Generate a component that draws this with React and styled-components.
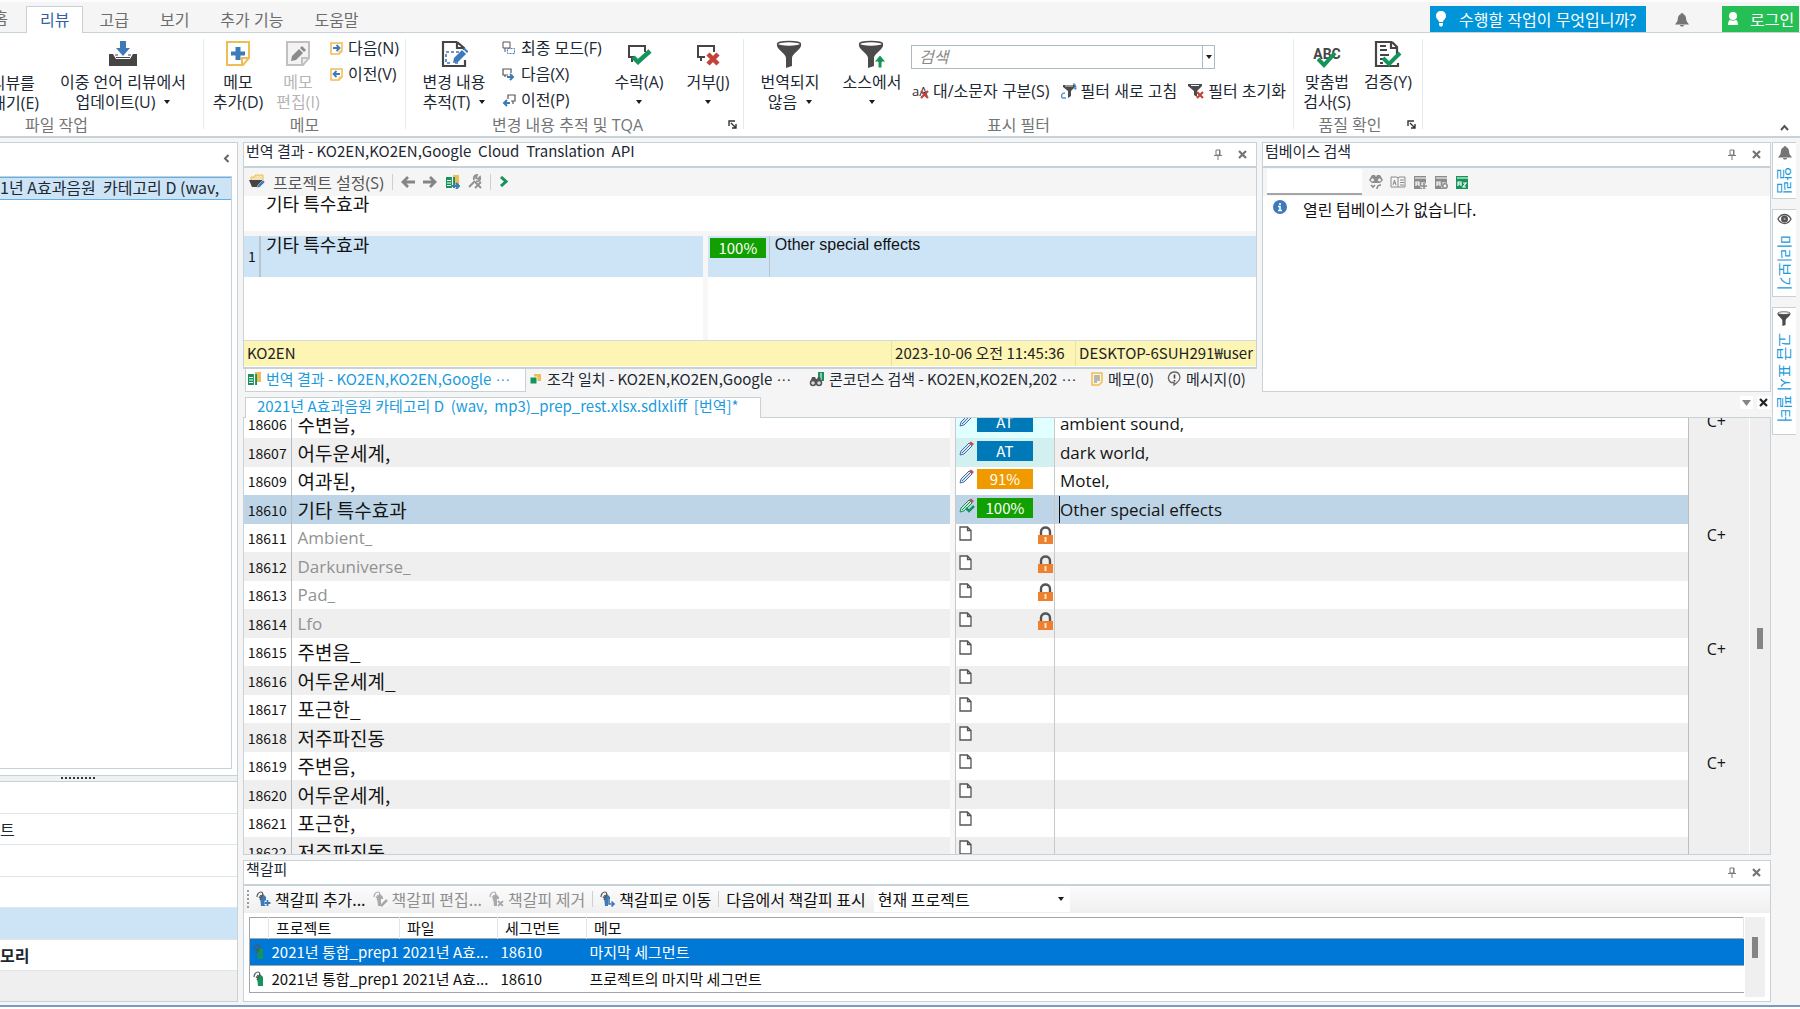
import React from 'react';
import styled, { createGlobalStyle, css } from 'styled-components';

const line = '#c6d2d8';
const ui = '"Open Sans", "Noto Sans CJK KR", sans-serif';
const thin = '"Noto Sans CJK KR", "Liberation Sans", sans-serif';

const GlobalStyle = createGlobalStyle`
  * { box-sizing: border-box; }
  html, body { margin: 0; }
  body {
    background: #f5f5f5;
    color: #1c2833;
    font-family: ${ui};
    font-size: 16px;
    overflow: hidden;
  }
  button, input, select {
    font: inherit;
    color: inherit;
    border: 0;
    padding: 0;
    margin: 0;
    background: none;
    border-radius: 0;
    outline: 0;
  }
  button { white-space: pre; }
  svg { display: block; flex: none; }
  table { border-collapse: collapse; border-spacing: 0; }
`;

/* ---------- icons ---------- */

const Svg = ({ w = 16, h = w, box, children }) => (
  <svg width={w} height={h} viewBox={box || `0 0 ${w} ${h}`} fill="none" aria-hidden="true">
    {children}
  </svg>
);

const Caret = () => <Svg w={6} h={4}><path d="M0 0h6L3 4z" fill="#1b1b1b" /></Svg>;

const UpdateIcon = () => (
  <Svg w={28}>
    <path d="M11 1h6v7h4l-7 8-7-8h4z" fill="#3f7ab8" />
    <path d="M0 14h4l3 5h14l3-5h4v12H0z" fill="#454545" />
    <path d="M6 15h3M19 15h3M7 17.500h14" stroke="#454545" strokeWidth="1.200" />
  </Svg>
);

const NoteAddIcon = () => (
  <Svg w={28}>
    <path d="M3 2h22v16l-6 7H3z" stroke="#eebd55" strokeWidth="2" fill="#fff" />
    <path d="M24 18h-6v7" stroke="#eebd55" strokeWidth="2" />
    <path d="M11.500 7h5v4.500H21v4h-4.500V20h-5v-4.500H7v-4h4.500z" fill="#3f7ab8" />
  </Svg>
);

const NoteEditIcon = () => (
  <Svg w={28}>
    <path d="M3 2h22v16l-6 7H3z" stroke="#c0c0c0" strokeWidth="2" fill="#f3f3f3" />
    <path d="M24 18h-6v7" stroke="#c0c0c0" strokeWidth="2" />
    <path d="M7 21l1-5 7-7 4 4-7 7zM16 8l2-2 4 4-2 2z" fill="#8b8b8b" />
  </Svg>
);

const NoteArrow = ({ back }) => (
  <Svg w={13}>
    <path d="M1 1h11v8l-3 3H1z" stroke="#eebd55" strokeWidth="1.500" fill="#fff" />
    <path d="M12 9H9v3" stroke="#eebd55" />
    <path
      d={back ? 'M10 6H4M6.500 3L3.500 6l3 3' : 'M3 6h6M6.500 3l3 3-3 3'}
      stroke="#3f7ab8"
      strokeWidth="1.800"
    />
  </Svg>
);

const TrackIcon = () => (
  <Svg w={28}>
    <path d="M17 2H3v24h22v-6M17 2l7 6v2M17 2v6h7" stroke="#454545" strokeWidth="2.200" />
    <path d="M19 12H6v11h6M18 23h-4" stroke="#3f7ab8" strokeWidth="1.600" strokeDasharray="3 2" />
    <path d="M13 23l1-5 8-8 4 4-8 8zM23 9l1.500-1.500 4 4L27 13z" fill="#3f7ab8" />
  </Svg>
);

const FinalModeIcon = () => (
  <Svg w={14}>
    <path d="M1 1h7v6H1zM3 7v4" stroke="#555" />
    <path d="M5.500 7.500h7v5h-7z" stroke="#3f7ab8" strokeDasharray="2 1" />
  </Svg>
);

const ChangeArrow = ({ back }) => (
  <Svg w={14}>
    <path
      d={back ? 'M6 6V2h7v6H9M11 8v3' : 'M6 8H1V2h8v4M3 8v2'}
      stroke="#555"
      strokeWidth="1.200"
    />
    <path
      d={back ? 'M8 10H2M5 7l-3 3 3 3' : 'M5 10h6M8 7l3 3-3 3'}
      stroke="#3f7ab8"
      strokeWidth="2"
    />
  </Svg>
);

const AcceptIcon = () => (
  <Svg w={26}>
    <path d="M8 16H3V5h16v6M6 16v5" stroke="#454545" strokeWidth="2" />
    <path d="M7 16l5 5L24 10" stroke="#14935a" strokeWidth="4.500" />
  </Svg>
);

const RejectIcon = () => (
  <Svg w={26}>
    <path d="M10 16H3V5h16v6M6 16v4" stroke="#454545" strokeWidth="2" />
    <path d="M13 13l10 10M23 13L13 23" stroke="#c24438" strokeWidth="4.500" />
  </Svg>
);

const Funnel = ({ w = 28, arrow }) => (
  <Svg w={w} box="0 0 28 28">
    <path d="M1 4v2c1 4 9 8 9 12v10l6-2v-8c0-4 8-8 9-12V4z" fill="#4b4b4b" />
    <ellipse cx="13" cy="4" rx="11.500" ry="2.500" fill="#fff" stroke="#4b4b4b" strokeWidth="1.500" />
    {arrow && <path d="M20 28v-6h-4l6-7 6 7h-4v6z" fill="#14935a" stroke="#fff" />}
  </Svg>
);

const FunnelRefresh = () => (
  <Svg w={16}>
    <path d="M2 2h12v2l-4 4v5l-3 2V8L2 4z" fill="#4b4b4b" />
    <path d="M4 3h8" stroke="#ddd" />
    <path d="M12 1c2 0 3 2 3 5M13 5l2 1.500M4 10c-3 0-4 2-3 5M1 15h4" stroke="#5b95d1" strokeWidth="1.400" />
  </Svg>
);

const FunnelClear = () => (
  <Svg w={16}>
    <path d="M0 1h14v2L9 8v6l-3-2V8L0 3z" fill="#4b4b4b" />
    <path d="M3 2.500h8" stroke="#fff" />
    <path d="M9 9l6 6M15 9l-6 6" stroke="#c24438" strokeWidth="2.200" />
  </Svg>
);

const CaseIcon = () => (
  <CaseGlyph>
    aA
    <Svg w={9}><path d="M1 1l7 7M8 1L1 8" stroke="#c24438" strokeWidth="2.200" /></Svg>
  </CaseGlyph>
);

const SpellIcon = () => (
  <AbcGlyph>
    ABC
    <Svg w={20} h={16}><path d="M1 7l6 6L18 1" stroke="#14935a" strokeWidth="4" /></Svg>
  </AbcGlyph>
);

const VerifyIcon = () => (
  <Svg w={28}>
    <path d="M18 2H2v24h22v-3M18 2l5 5v7M17 2v6h6" stroke="#454545" strokeWidth="2.200" />
    <path d="M6 6h6M6 10h7M6 15h9M6 19h3M6 23h3" stroke="#454545" strokeWidth="2" />
    <path d="M9 18l6 6L26 13" stroke="#14935a" strokeWidth="4" />
  </Svg>
);

const Launcher = () => (
  <Svg w={9}><path d="M1 6V1h6M3 3l5 5M8 4v4H4" stroke="#333" strokeWidth="1.400" /></Svg>
);

const Bell = ({ w = 14 }) => (
  <Svg w={w} h={w} box="0 0 14 14">
    <path d="M7 0c1 0 1.500 1 1.500 1.500C11 2 11 5 11.500 8L14 11.500H0L2.500 8C3 5 3 2 5.500 1.500 5.500 1 6 0 7 0zM5 12h4c0 2-4 2-4 0z" fill="#757575" />
  </Svg>
);

const Bulb = () => (
  <Svg w={12} h={16}>
    <path d="M6 0c3 0 5 2 5 5s-3 4-3 6H4C4 9 1 8 1 5s2-5 5-5zM4 12h4v2l-1 1.500H5L4 14z" fill="#fff" />
  </Svg>
);

const Person = () => (
  <Svg w={12} h={14}>
    <circle cx="6" cy="4" r="4" fill="#fff" />
    <path d="M1 13c0-3 1-5 2-5 2 1 4 1 6 0 1 0 2 2 2 5z" fill="#fff" />
  </Svg>
);

const Pin = () => (
  <Svg w={8} h={11}><path d="M2 1h4v5H2zM0 6.500h8M4 7v4M5.500 1v5" stroke="#7b7b7b" /></Svg>
);

const Cross = ({ color = '#747474' }) => (
  <Svg w={9}><path d="M1 1l7 7M8 1L1 8" stroke={color} strokeWidth="2.200" /></Svg>
);

const ProjectIcon = () => (
  <Svg w={16}>
    <path d="M2 6V3h4V1h8v5" fill="#f7e2ae" stroke="#eebd55" />
    <path d="M0 6h13v2l-3 5H3z" fill="#454545" />
    <path d="M8 14l1-3 5-5 2 2-5 5z" fill="#3f7ab8" stroke="#f5f5f5" strokeWidth="0.500" />
  </Svg>
);

const Arrow = ({ back }) => (
  <Svg w={14} h={12}>
    <path d={back ? 'M14 6H2M7 1L2 6l5 5' : 'M0 6h12M7 1l5 5-5 5'} stroke="#858585" strokeWidth="2.800" />
  </Svg>
);

const MemoryIcon = ({ arrow }) => (
  <Svg w={15}>
    <path d="M8 1h6v10H8z" fill="#eebd55" />
    <path d="M1 3h9v11H1z" fill="#14935a" />
    <path d="M2 6.500h4M2 9h4M2 11.500h4M7.500 3v11" stroke="#fff" strokeWidth="1.200" />
    {arrow && <path d="M7 12h7M11 9l3 3-3 3" stroke="#3f7ab8" strokeWidth="2" />}
  </Svg>
);

const ToolsIcon = () => (
  <Svg w={14} h={15}>
    <path d="M1 13l6-6M6 6c-1-3 1-5 3-5l-1 3 2 1 2-2c1 3-1 5-4 4" stroke="#909090" strokeWidth="1.800" />
    <path d="M7 8l6 6M13 8l-6 6" stroke="#909090" strokeWidth="1.800" />
  </Svg>
);

const ChevronGo = () => (
  <Svg w={9} h={11}><path d="M2 1l5 4.500L2 10" stroke="#14935a" strokeWidth="3" /></Svg>
);

const FragmentIcon = () => (
  <Svg w={14}><path d="M5 2h7v7H5z" fill="#eebd55" /><path d="M1 5h7v7H1z" fill="#14935a" stroke="#f5f5f5" /></Svg>
);

const ConcordanceIcon = () => (
  <Svg w={16}>
    <path d="M9 1h6v9H9z" fill="#14935a" />
    <path d="M12 2v7" stroke="#fff" strokeWidth="1" />
    <path d="M3 6h3l1 2h1l1-2h2l2 6H1z" fill="#555" />
    <circle cx="4" cy="12" r="2.500" fill="#ddd" stroke="#555" strokeWidth="1.500" />
    <circle cx="10" cy="12" r="2.500" fill="#ddd" stroke="#555" strokeWidth="1.500" />
  </Svg>
);

const MemoIcon = () => (
  <Svg w={13} h={14}>
    <path d="M1 1h10v9l-3 3H1z" fill="#fdf6e3" stroke="#eebd55" strokeWidth="1.500" />
    <path d="M3 4h6M3 6h6M3 8h6M3 10h3" stroke="#777" />
  </Svg>
);

const MessageIcon = () => (
  <Svg w={15}>
    <path d="M4 11.500C-1 8 2 1 7.500 1S15 8 10 11.500L7 14v-2.500z" stroke="#666" strokeWidth="1.300" />
    <path d="M7.500 3.500v4M7.500 9v1.500" stroke="#444" strokeWidth="1.600" />
  </Svg>
);

const BinocularIcon = () => (
  <Svg w={14} h={16}>
    <path d="M3 1h3l1 2 1-2h3l3 5-3 3H3L0 6z" fill="#8b8b8b" />
    <circle cx="3.500" cy="6" r="2" fill="#f5f5f5" stroke="#8b8b8b" />
    <circle cx="10.500" cy="6" r="2" fill="#f5f5f5" stroke="#8b8b8b" />
    <path d="M2 11l2 2 2-2M8 15c0-3 1-4 4-4" stroke="#8b8b8b" strokeWidth="1.600" />
  </Svg>
);

const BookOpenIcon = () => (
  <Svg w={16} h={14}>
    <path d="M1 2h6l1 1 1-1h6v10H1zM8 3v9M10 5h4M10 7.500h4M10 10h4M3 10l1.500-5L6 10M3.500 8h2" stroke="#8b8b8b" />
  </Svg>
);

const TermIcon = ({ color = '#8b8b8b', mark }) => (
  <Svg w={14} h={15}>
    <path d="M1 1h12v13H1z" fill={color} />
    <path d="M2 3h11" stroke="#fff" />
    <path d="M3 11V7h3v4M3 9h3M8 8h3l-3 4h3" stroke="#fff" strokeWidth="1.200" />
    {mark && <circle cx="11" cy="11" r="3" fill="#f5f5f5" />}
    {mark === 'plus' && <path d="M11 8v6M8 11h6" stroke={color} strokeWidth="1.600" />}
    {mark === 'gear' && <circle cx="11" cy="11" r="2.200" stroke={color} strokeWidth="1.500" />}
  </Svg>
);

const InfoIcon = () => (
  <Svg w={14}>
    <circle cx="7" cy="7" r="7" fill="#3f7ab8" />
    <path d="M7 3v2M5 6.500h2v4M5 10.500h4" stroke="#fff" strokeWidth="1.600" />
  </Svg>
);

const EyeIcon = () => (
  <Svg w={15} h={12}>
    <path d="M1 6c3-6 10-6 13 0-3 6-10 6-13 0z" stroke="#555" strokeWidth="1.300" />
    <circle cx="7.500" cy="6" r="3.500" fill="#555" />
    <circle cx="7.500" cy="6" r="1" fill="#aaa" />
  </Svg>
);

const DraftIcon = ({ done }) => (
  <Svg w={16}>
    <path d="M1 14l1-4 8-8 3 3-8 8z" fill={done ? '#c9e6d8' : '#dbe7f5'} stroke={done ? '#14935a' : '#3f6fae'} />
    <path d="M3 12l8-8" stroke={done ? '#14935a' : '#3f6fae'} />
    <path d="M10 2l2-1.500 3 2.500-2 2z" fill="#c9504a" />
    {done && <path d="M7 10l3 3 5-5" stroke="#14935a" strokeWidth="2.500" />}
  </Svg>
);

const PageIcon = () => (
  <Svg w={13} h={15}>
    <path d="M1 1h7.500L12 4.500V14H1zM8.500 1v3.500H12" fill="#fff" stroke="#555" strokeWidth="1.300" />
  </Svg>
);

const LockIcon = () => (
  <Svg w={15} h={18}>
    <path d="M3 9V6c0-6 9-6 9 0v3" stroke="#555" strokeWidth="2.400" />
    <path d="M0 9h15v9H0z" fill="#ee8130" />
    <path d="M7.500 11v5" stroke="#ffe2c8" strokeWidth="2" />
  </Svg>
);

/* a tag on a clip; "kind" adds the action mark */
const MarkIcon = ({ kind, off }) => {
  const tone = off ? '#a9a9a9' : '#3f7ab8';
  return (
    <Svg w={15} h={16}>
      <path d="M4 6l3-3 3 3v9H5z" fill={kind ? tone : '#14935a'} />
      <path d="M1 6c0-3 2-5 4-5s2 2 1 4L4 9M3 7l2-3" stroke={off ? '#a9a9a9' : '#555'} strokeWidth="1.200" />
      {kind && kind !== 'add' && <path d="M8 8h7v8H8z" fill="#f8f8f8" />}
      {kind === 'add' && <path d="M11.500 9v6M8.500 12h6" stroke="#f8f8f8" strokeWidth="4" />}
      {kind === 'add' && <path d="M11.500 9v6M8.500 12h6" stroke={tone} strokeWidth="1.800" />}
      {kind === 'edit' && <path d="M8 15l6-6" stroke={tone} strokeWidth="2.600" />}
      {kind === 'remove' && <path d="M9 10l5 5M14 10l-5 5" stroke={tone} strokeWidth="1.800" />}
      {kind === 'go' && <path d="M9 8v5h5M11.500 10.500l2.500 2.500-2.500 2.500" stroke={tone} strokeWidth="1.600" />}
    </Svg>
  );
};

/* ---------- top bar and ribbon ---------- */

const tabs = [
  { id: 1, label: '리뷰', active: true },
  { id: 2, label: '고급' },
  { id: 3, label: '보기' },
  { id: 4, label: '추가 기능' },
  { id: 5, label: '도움말' },
];

const TopBar = () => (
  <Top>
    <CutTab><span>홈</span></CutTab>
    {tabs.map((tab) => (
      <MenuTab key={tab.id} $active={tab.active}>{tab.label}</MenuTab>
    ))}
    <Spacer />
    <TellMe><Bulb />수행할 작업이 무엇입니까?</TellMe>
    <BellButton aria-label="알림"><Bell w={14} /></BellButton>
    <Login><Person />로그인</Login>
  </Top>
);

const BigItem = ({ icon, lines, caret, width, off }) => (
  <Big $width={width} $off={off}>
    <BigIcon>{icon}</BigIcon>
    <span>{lines[0]}</span>
    <BigLine>{lines[1]}{caret && <Caret />}</BigLine>
  </Big>
);

const Ribbon = () => (
  <RibbonBar>
    <Group $width={204}>
      <GroupBody>
        <CutButton>
          <span>리뷰를 </span>
          <span>내기(E)</span>
        </CutButton>
        <BigItem width={168} icon={<UpdateIcon />} lines={['이중 언어 리뷰에서', '업데이트(U)']} caret />
      </GroupBody>
      <GroupLabel $right={90}>파일 작업</GroupLabel>
    </Group>
    <Group $width={202}>
      <GroupBody>
        <BigItem width={68} icon={<NoteAddIcon />} lines={['메모', '추가(D)']} />
        <BigItem width={52} icon={<NoteEditIcon />} lines={['메모', '편집(I)']} off />
        <SmallList>
          <Small><NoteArrow />다음(N)</Small>
          <Small><NoteArrow back />이전(V)</Small>
        </SmallList>
      </GroupBody>
      <GroupLabel>메모</GroupLabel>
    </Group>
    <Group $width={338}>
      <GroupBody>
        <BigItem width={96} icon={<TrackIcon />} lines={['변경 내용', '추적(T)']} caret />
        <SmallList $narrow>
          <Small><FinalModeIcon />최종 모드(F)</Small>
          <Small><ChangeArrow />다음(X)</Small>
          <Small><ChangeArrow back />이전(P)</Small>
        </SmallList>
        <Spacer />
        <BigItem width={68} icon={<AcceptIcon />} lines={['수락(A)', '']} caret />
        <BigItem width={70} icon={<RejectIcon />} lines={['거부(J)', '']} caret />
      </GroupBody>
      <GroupLabel $right={14}>변경 내용 추적 및 TQA</GroupLabel>
      <LauncherButton aria-label="추적 설정"><Launcher /></LauncherButton>
    </Group>
    <Group $width={550}>
      <GroupBody>
        <BigItem width={92} icon={<Funnel />} lines={['번역되지', '않음']} caret />
        <BigItem width={72} icon={<Funnel arrow />} lines={['소스에서', '']} caret />
        <FilterBox>
          <SearchRow>
            <SearchInput aria-label="검색" placeholder="검색" />
            <SearchDrop aria-label="최근 검색"><Caret /></SearchDrop>
          </SearchRow>
          <FilterRow>
            <FilterButton><CaseIcon />대/소문자 구분(S)</FilterButton>
            <FilterButton><FunnelRefresh />필터 새로 고침</FilterButton>
            <FilterButton><FunnelClear />필터 초기화</FilterButton>
          </FilterRow>
        </FilterBox>
      </GroupBody>
      <GroupLabel>표시 필터</GroupLabel>
    </Group>
    <Group $width={129}>
      <GroupBody>
        <BigItem width={66} icon={<SpellIcon />} lines={['맞춤법', '검사(S)']} />
        <BigItem width={56} icon={<VerifyIcon />} lines={['검증(Y)', '']} />
      </GroupBody>
      <GroupLabel $right={16}>품질 확인</GroupLabel>
      <LauncherButton aria-label="품질 설정"><Launcher /></LauncherButton>
    </Group>
    <Spacer />
    <Collapse aria-label="리본 축소">
      <Svg w={9} h={7}><path d="M1 6l3.500-4L8 6" stroke="#555" strokeWidth="2" /></Svg>
    </Collapse>
  </RibbonBar>
);

/* ---------- left navigation ---------- */

const navRows = [
  { id: 1, text: '' },
  { id: 2, text: '트' },
  { id: 3, text: '' },
  { id: 4, text: '' },
  { id: 5, text: '', bg: '#cde4f7' },
  { id: 6, text: '모리', bold: true },
  { id: 7, text: '', bg: '#efefef' },
];

const LeftPane = () => (
  <Left>
    <LeftHead>
      <button aria-label="접기">
        <Svg w={7} h={9}><path d="M5.500 1L2 4.500 5.500 8" stroke="#666" strokeWidth="2" /></Svg>
      </button>
    </LeftHead>
    <FileList>
      <FileItem>1년 A효과음원  카테고리 D (wav,</FileItem>
    </FileList>
    <Splitter><Dots /></Splitter>
    <NavList>
      {navRows.map((row) => (
        <NavRow key={row.id} $bg={row.bg} $bold={row.bold}>{row.text}</NavRow>
      ))}
    </NavList>
  </Left>
);

/* ---------- panels ---------- */

const PanelHead = ({ title }) => (
  <Head>
    <HeadTitle>{title}</HeadTitle>
    <HeadButton aria-label="고정"><Pin /></HeadButton>
    <HeadButton aria-label="닫기"><Cross /></HeadButton>
  </Head>
);

const resultTabs = [
  { id: 1, icon: <MemoryIcon />, label: '번역 결과 - KO2EN,KO2EN,Google', more: true, active: true, width: 281 },
  { id: 2, icon: <FragmentIcon />, label: '조각 일치 - KO2EN,KO2EN,Google', more: true, width: 280 },
  { id: 3, icon: <ConcordanceIcon />, label: '콘코던스 검색 - KO2EN,KO2EN,202', more: true, width: 282 },
  { id: 4, icon: <MemoIcon />, label: '메모(0)', width: 76 },
  { id: 5, icon: <MessageIcon />, label: '메시지(0)', width: 92 },
];

const Results = () => (
  <ResultsColumn>
    <Panel>
      <PanelHead title="번역 결과 - KO2EN,KO2EN,Google  Cloud  Translation  API" />
      <Toolbar>
        <ToolButton $gap={8}><ProjectIcon />프로젝트 설정(S)</ToolButton>
        <Divider />
        <ToolButton aria-label="이전"><Arrow back /></ToolButton>
        <ToolButton aria-label="다음"><Arrow /></ToolButton>
        <ToolButton aria-label="적용"><MemoryIcon arrow /></ToolButton>
        <ToolButton aria-label="도구"><ToolsIcon /></ToolButton>
        <Divider />
        <ToolButton aria-label="실행"><ChevronGo /></ToolButton>
      </Toolbar>
      <SourceLine>기타 특수효과</SourceLine>
      <Match>
        <MatchNumber>1</MatchNumber>
        <MatchSource>기타 특수효과</MatchSource>
        <MatchScore><Badge $bg="#12a000">100%</Badge></MatchScore>
        <MatchTarget>Other special effects</MatchTarget>
      </Match>
      <MatchBlank><i /></MatchBlank>
      <Status>
        <StatusCell $grow>KO2EN</StatusCell>
        <StatusCell $width={184}>2023-10-06 오전 11:45:36</StatusCell>
        <StatusCell>DESKTOP-6SUH291₩user</StatusCell>
      </Status>
    </Panel>
    <ResultTabs>
      {resultTabs.map((tab) => (
        <ResultTab key={tab.id} $active={tab.active} $width={tab.width}>
          {tab.icon}{tab.label}{tab.more && <More>···</More>}
        </ResultTab>
      ))}
    </ResultTabs>
  </ResultsColumn>
);

const Termbase = () => (
  <TermPanel>
    <PanelHead title="텀베이스 검색" />
    <TermTools>
      <TermInput aria-label="텀베이스 검색" />
      <button aria-label="검색"><BinocularIcon /></button>
      <button aria-label="용어집"><BookOpenIcon /></button>
      <button aria-label="용어 추가"><TermIcon mark="plus" /></button>
      <button aria-label="용어 설정"><TermIcon mark="gear" /></button>
      <button aria-label="용어 인식"><TermIcon color="#14935a" /></button>
    </TermTools>
    <TermMessage><InfoIcon />열린 텀베이스가 없습니다.</TermMessage>
  </TermPanel>
);

const segments = [
  { id: 18606, source: '주변음,', state: 'draft', badge: 'AT', bg: '#0079b8', tint: '#e0ffff', target: 'ambient sound,', code: 'C+' },
  { id: 18607, source: '어두운세계,', state: 'draft', badge: 'AT', bg: '#0079b8', tint: '#d2f0f0', target: 'dark world,' },
  { id: 18609, source: '여과된,', state: 'draft', badge: '91%', bg: '#f09a00', target: 'Motel,' },
  { id: 18610, source: '기타 특수효과', state: 'done', badge: '100%', bg: '#12a000', target: 'Other special effects', active: true },
  { id: 18611, source: 'Ambient_', locked: true, code: 'C+' },
  { id: 18612, source: 'Darkuniverse_', locked: true },
  { id: 18613, source: 'Pad_', locked: true },
  { id: 18614, source: 'Lfo', locked: true },
  { id: 18615, source: '주변음_', code: 'C+' },
  { id: 18616, source: '어두운세계_' },
  { id: 18617, source: '포근한_' },
  { id: 18618, source: '저주파진동' },
  { id: 18619, source: '주변음,', code: 'C+' },
  { id: 18620, source: '어두운세계,' },
  { id: 18621, source: '포근한,' },
  { id: 18622, source: '저주파진동' },
];

const Segment = ({ id, source, state, badge, bg, tint, target, code, locked, active }) => (
  <SegmentRow $active={active}>
    <NumberCell>{id}</NumberCell>
    <SourceCell $locked={locked}>{source}</SourceCell>
    <GapCell />
    <StateCell $tint={tint}>
      <StateParts>
        {state ? <DraftIcon done={state === 'done'} /> : <PageIcon />}
        {badge && <Badge $bg={bg}>{badge}</Badge>}
        {locked && <><Spacer /><LockIcon /></>}
      </StateParts>
    </StateCell>
    <TargetCell>{active ? <Cursor>{target}</Cursor> : target}</TargetCell>
    <CodeCell>{code}</CodeCell>
  </SegmentRow>
);

const Editor = () => (
  <>
    <DocTabs>
      <DocTab>2021년 A효과음원 카테고리 D  (wav,  mp3)_prep_rest.xlsx.sdlxliff  [번역]*</DocTab>
      <DocTools>
        <button aria-label="문서 목록"><Svg w={9} h={6}><path d="M0 0h9L4.500 6z" fill="#858585" /></Svg></button>
        <button aria-label="문서 닫기"><Cross color="#222" /></button>
      </DocTools>
    </DocTabs>
    <Grid>
      <GridView>
        <SegmentTable>
          <colgroup>
            <col style={{ width: 47 }} />
            <col style={{ width: '51%' }} />
            <col style={{ width: 5 }} />
            <col style={{ width: 99 }} />
            <col style={{ width: '49%' }} />
            <col style={{ width: 61 }} />
          </colgroup>
          <tbody>
            {segments.map((segment) => <Segment key={segment.id} {...segment} />)}
          </tbody>
        </SegmentTable>
      </GridView>
      <ScrollBar $top={210}><i /></ScrollBar>
    </Grid>
  </>
);

const bookmarks = [
  { id: 1, memo: '마지막 세그먼트', active: true },
  { id: 2, memo: '프로젝트의 마지막 세그먼트' },
];

const Bookmarks = () => (
  <BookmarkPanel>
    <PanelHead title="책갈피" />
    <MarkTools>
      <Grip />
      <MarkButton><MarkIcon kind="add" />책갈피 추가...</MarkButton>
      <MarkButton $off><MarkIcon kind="edit" off />책갈피 편집...</MarkButton>
      <MarkButton $off><MarkIcon kind="remove" off />책갈피 제거</MarkButton>
      <Divider />
      <MarkButton><MarkIcon kind="go" />책갈피로 이동</MarkButton>
      <Divider />
      <label htmlFor="scope">다음에서 책갈피 표시</label>
      <SelectWrap>
        <select id="scope"><option>현재 프로젝트</option></select>
        <Caret />
      </SelectWrap>
    </MarkTools>
    <MarkBody>
      <MarkTable>
        <colgroup>
          <col style={{ width: 19 }} />
          <col style={{ width: 131 }} />
          <col style={{ width: 98 }} />
          <col style={{ width: 89 }} />
          <col />
        </colgroup>
        <thead>
          <tr><th /><th>프로젝트</th><th>파일</th><th>세그먼트</th><th>메모</th></tr>
        </thead>
        <tbody>
          {bookmarks.map((row) => (
            <MarkRow key={row.id} $active={row.active}>
              <td><MarkIcon /></td>
              <td>2021년 통합_prep1</td>
              <td>2021년 A효...</td>
              <td>18610</td>
              <td>{row.memo}</td>
            </MarkRow>
          ))}
        </tbody>
      </MarkTable>
      <ScrollBar $top={20}><i /></ScrollBar>
    </MarkBody>
  </BookmarkPanel>
);

const App = () => (
  <Page>
    <GlobalStyle />
    <TopBar />
    <Ribbon />
    <Workspace>
      <LeftPane />
      <Center>
        <UpperPanels>
          <Results />
          <Termbase />
        </UpperPanels>
        <Editor />
        <Bookmarks />
      </Center>
      <Side>
        <SideTab $height={57}><Bell />알림</SideTab>
        <SideTab $height={88} $gap={10}><EyeIcon />미리보기</SideTab>
        <SideTab $height={128}><Funnel w={15} />고급 표시 필터</SideTab>
      </Side>
    </Workspace>
    <Footer />
  </Page>
);

/* ---------- styles ---------- */

const Page = styled.div`
  display: flex;
  flex-direction: column;
  height: 100vh;
`;

const Spacer = styled.div`
  flex: 1;
`;

const Top = styled.nav`
  display: flex;
  align-items: flex-end;
  flex: none;
  height: 33px;
  border-top: 2px solid #fdfdfd;
  border-bottom: 1px solid ${line};
`;

const tabBase = css`
  height: 26px;
  line-height: 24px;
  color: #6d6d6d;
`;

const CutTab = styled.button`
  ${tabBase}
  display: flex;
  justify-content: flex-end;
  width: 26px;
  padding-right: 18px;
  overflow: hidden;
`;

const MenuTab = styled.button`
  ${tabBase}
  padding: 0 14px;
  margin-right: 1px;
  border: 1px solid transparent;
  border-bottom: 0;
  ${({ $active }) => $active && css`
    height: 27px;
    margin-bottom: -1px;
    padding: 0 13px;
    background: #fff;
    border-color: ${line};
    color: #2f5fa5;
  `}
`;

const TellMe = styled.button`
  display: flex;
  align-items: center;
  gap: 12px;
  width: 216px;
  height: 26px;
  padding-left: 5px;
  background: #0095d9;
  color: #fff;
`;

const BellButton = styled.button`
  display: grid;
  place-items: center;
  width: 76px;
  height: 25px;
  padding-right: 4px;
`;

const Login = styled.button`
  display: flex;
  align-items: center;
  gap: 11px;
  width: 77px;
  height: 26px;
  margin-right: 1px;
  padding-left: 5px;
  background: #25bf55;
  color: #fff;
`;

const RibbonBar = styled.header`
  display: flex;
  flex: none;
  height: 105px;
  background: #fff;
  border-bottom: 2px solid ${line};
`;

const Group = styled.section`
  position: relative;
  display: flex;
  flex-direction: column;
  flex: none;
  width: ${({ $width }) => $width}px;
  margin: 6px 0 7px;
  border-right: 1px solid #e6eaed;
`;

const GroupBody = styled.div`
  display: flex;
  flex: none;
  height: 75px;
`;

const GroupLabel = styled.div`
  padding-right: ${({ $right }) => $right || 0}px;
  text-align: center;
  line-height: 22px;
  color: #757575;
`;

const LauncherButton = styled.button`
  position: absolute;
  right: 6px;
  bottom: 0;
`;

const Big = styled.button`
  display: flex;
  flex-direction: column;
  align-items: center;
  flex: none;
  width: ${({ $width }) => $width}px;
  line-height: 20px;
  color: ${({ $off }) => ($off ? '#b5b5b5' : 'inherit')};
`;

const BigIcon = styled.span`
  display: grid;
  place-items: center;
  height: 28px;
  margin: 1px 0 4px;
`;

const BigLine = styled.span`
  display: flex;
  align-items: center;
  gap: 9px;
  height: 20px;
`;

const CutButton = styled.button`
  display: flex;
  flex-direction: column;
  align-items: flex-end;
  justify-content: flex-end;
  flex: none;
  width: 39px;
  padding-bottom: 1px;
  overflow: hidden;
  line-height: 20px;
`;

const SmallList = styled.div`
  display: flex;
  flex-direction: column;
  gap: 6px;
  padding-left: ${({ $narrow }) => ($narrow ? 0 : 6)}px;
  margin-top: -1px;
`;

const Small = styled.button`
  display: flex;
  align-items: center;
  gap: 5px;
  height: 20px;
  line-height: 20px;
`;

const FilterBox = styled.div`
  display: flex;
  flex-direction: column;
  gap: 12px;
  padding: 6px 0 0 3px;
`;

const SearchRow = styled.div`
  display: flex;
  width: 304px;
  height: 24px;
  border: 1px solid #aebac1;
`;

const SearchInput = styled.input`
  flex: 1;
  min-width: 0;
  padding: 0 7px;
  &::placeholder {
    color: #8a8a8a;
    font-style: italic;
    opacity: 1;
  }
`;

const SearchDrop = styled.button`
  display: grid;
  place-items: center;
  width: 12px;
  border-left: 1px solid #aebac1;
`;

const FilterRow = styled.div`
  display: flex;
  gap: 11px;
  padding-left: 1px;
`;

const FilterButton = styled.button`
  display: flex;
  align-items: center;
  gap: 4px;
  line-height: 20px;
`;

const CaseGlyph = styled.span`
  position: relative;
  width: 17px;
  font-size: 13px;
  line-height: 20px;
  text-align: left;
  svg {
    position: absolute;
    right: 0;
    bottom: 2px;
  }
`;

const AbcGlyph = styled.span`
  position: relative;
  font: bold 14px/16px Roboto, sans-serif;
  color: #454545;
  svg {
    position: absolute;
    left: 4px;
    top: 6px;
  }
`;

const Collapse = styled.button`
  align-self: flex-end;
  margin: 0 11px 5px 0;
`;

const Workspace = styled.div`
  display: flex;
  flex: 1;
  min-height: 0;
  padding-top: 4px;
`;

const Left = styled.aside`
  display: flex;
  flex-direction: column;
  flex: none;
  width: 238px;
  background: #fff;
  border: 1px solid ${line};
  border-left: 0;
  font: 16px/20px ${thin};
`;

const LeftHead = styled.div`
  display: flex;
  justify-content: flex-end;
  align-items: center;
  height: 31px;
  padding-right: 7px;
`;

const FileList = styled.div`
  flex: 1;
  margin: 2px 5px 6px 0;
  border: 1px solid ${line};
  border-left: 0;
`;

const FileItem = styled.div`
  height: 23px;
  overflow: hidden;
  white-space: pre;
  line-height: 18px;
  background: #cde4f7;
  border: 1px solid #62aee6;
  border-width: 1px 0;
`;

const Splitter = styled.div`
  display: flex;
  flex: none;
  justify-content: center;
  padding: 1px 80px 0 0;
  height: 7px;
  background: #eff1f2;
  border: 1px solid ${line};
  border-width: 1px 0;
`;

const Dots = styled.i`
  width: 35px;
  height: 2px;
  background: repeating-linear-gradient(90deg, #333 0 2px, transparent 2px 4px);
`;

const NavList = styled.div`
  flex: none;
`;

const NavRow = styled.div`
  height: 31px;
  line-height: 30px;
  border-bottom: 1px solid #dfe5e9;
  background: ${({ $bg }) => $bg || '#fff'};
  font-weight: ${({ $bold }) => ($bold ? 700 : 400)};
  &:nth-child(odd) {
    height: 32px;
  }
  &:last-child {
    height: 30px;
    border-bottom: 0;
  }
`;

const Center = styled.main`
  display: flex;
  flex-direction: column;
  flex: 1;
  min-width: 0;
  margin-left: 5px;
`;

const UpperPanels = styled.div`
  display: flex;
  gap: 5px;
  flex: none;
  height: 250px;
`;

const ResultsColumn = styled.div`
  display: flex;
  flex-direction: column;
  flex: 2;
  min-width: 0;
`;

const Panel = styled.section`
  flex: 1;
  background: #fff;
  border: 1px solid ${line};
  border-bottom-width: 2px;
`;

const Head = styled.div`
  display: flex;
  height: 25px;
  padding-right: 1px;
  background: #fff;
  border-bottom: 2px solid ${line};
`;

const HeadTitle = styled.h2`
  flex: 1;
  margin: 0;
  padding-left: 2px;
  font: 15px/16px ${thin};
  white-space: pre;
`;

const HeadButton = styled.button`
  display: grid;
  place-items: center;
  width: 25px;
`;

const Toolbar = styled.div`
  display: flex;
  align-items: center;
  gap: 8px;
  height: 28px;
  padding: 0 0 1px 5px;
  background: #f5f5f5;
  color: #555;
`;

const ToolButton = styled.button`
  display: flex;
  align-items: center;
  gap: ${({ $gap }) => $gap || 0}px;
`;

const Divider = styled.i`
  width: 1px;
  height: 16px;
  background: #cfcfcf;
`;

const SourceLine = styled.div`
  height: 40px;
  padding-left: 22px;
  border-bottom: 5px solid #f5f5f5;
  font: 18px/14px ${thin};
  color: #111;
`;

const Match = styled.div`
  display: flex;
  height: 41px;
  background: #cde4f7;
  font: 18px/16px ${thin};
  color: #111;
`;

const MatchNumber = styled.div`
  width: 17px;
  border-right: 2px solid #b9c5cc;
  padding-left: 4px;
  font: 14px/41px ${thin};
`;

const MatchSource = styled.div`
  flex: 443;
  padding-left: 5px;
`;

const MatchScore = styled.div`
  width: 66px;
  padding: 2px;
  border: 0 solid #f7f7f7;
  border-left-width: 5px;
  box-shadow: 1px 0 #b9c5cc;
`;

const MatchTarget = styled.div`
  flex: 488;
  padding-left: 6px;
  font: 16px/18px "Liberation Sans", sans-serif;
`;

const MatchBlank = styled.div`
  display: flex;
  height: 64px;
  padding-left: 17px;
  border-bottom: 1px solid #cddce4;
  &::before {
    content: '';
    flex: 443;
  }
  &::after {
    content: '';
    flex: 549;
  }
  i {
    width: 5px;
    background: #f7f7f7;
  }
`;

const Badge = styled.span`
  display: block;
  flex: none;
  width: 56px;
  height: 20px;
  background: ${({ $bg }) => $bg};
  color: #fff;
  font: 15px/20px "Noto Sans CJK KR", sans-serif;
  text-align: center;
`;

const Status = styled.div`
  display: flex;
  height: 25px;
  background: #fdf5b4;
  font: 15px/24px ${thin};
  color: #222;
`;

const StatusCell = styled.div`
  flex: ${({ $grow }) => ($grow ? 1 : 'none')};
  min-width: ${({ $width }) => $width || 0}px;
  padding: 0 3px;
  & + & {
    border-left: 1px solid #e6dfb0;
  }
`;

const ResultTabs = styled.div`
  display: flex;
  height: 23px;
  padding-left: 2px;
`;

const ResultTab = styled.button`
  display: flex;
  align-items: center;
  gap: 4px;
  flex: none;
  width: ${({ $width }) => $width}px;
  padding: 0 0 4px 3px;
  overflow: hidden;
  font: 15px/20px ${thin};
  ${({ $active }) => $active && css`
    padding: 0 0 3px 1px;
    background: #fff;
    border: 1px solid ${line};
    border-top: 0;
    color: #1a9bdc;
  `}
`;

const More = styled.span`
  font-family: "Liberation Sans", sans-serif;
`;

const TermPanel = styled.section`
  flex: 1;
  min-width: 0;
  background: #fff;
  border: 1px solid ${line};
`;

const TermTools = styled.div`
  display: flex;
  align-items: center;
  gap: 7px;
  height: 28px;
  padding-left: 4px;
  background: #f5f5f5;
`;

const TermInput = styled.input`
  width: 95px;
  height: 26px;
  background: #fff;
  border-bottom: 2px solid #a5a5a5;
`;

const TermMessage = styled.p`
  display: flex;
  gap: 16px;
  margin: 0;
  padding: 4px 0 0 10px;
  font: 16px/18px ${thin};
  color: #111;
`;

const DocTabs = styled.div`
  display: flex;
  justify-content: space-between;
  align-items: flex-end;
  flex: none;
  height: 26px;
  border-bottom: 1px solid ${line};
`;

const DocTab = styled.button`
  width: 516px;
  height: 21px;
  margin: 0 0 -1px 2px;
  padding: 0 0 4px 11px;
  overflow: hidden;
  text-align: left;
  font: 15px/16px ${thin};
  color: #1a9bdc;
  background: #fff;
  border: 1px solid ${line};
  border-bottom: 0;
`;

const DocTools = styled.div`
  display: flex;
  gap: 4px;
  padding: 0 1px 8px 0;
  button {
    display: grid;
    place-items: center;
    width: 13px;
    height: 13px;
    background: #fff;
  }
`;

const Grid = styled.section`
  display: flex;
  flex: 1;
  min-height: 0;
  border: 1px solid ${line};
  border-top: 0;
  background: #fff;
`;

const GridView = styled.div`
  flex: 1;
  min-width: 0;
  overflow: hidden;
`;

const SegmentTable = styled.table`
  width: 100%;
  table-layout: fixed;
  margin-top: -8px;
  font: 19px/28px "Noto Sans CJK KR", sans-serif;
  color: #141414;
`;

const SegmentRow = styled.tr`
  height: 28px;
  background: #fff;
  &:nth-child(even) {
    height: 29px;
    background: #efefef;
  }
  && {
    ${({ $active }) => $active && 'background: #bdd5e7;'}
  }
  td {
    padding: 0;
    height: 28px;
    white-space: nowrap;
    overflow: hidden;
  }
`;

const NumberCell = styled.td`
  border-right: 1px solid #b9bdc0;
  text-align: center;
  font: 14px/28px "Noto Sans CJK KR", sans-serif;
`;

const SourceCell = styled.td`
  && {
    padding-left: 6px;
  }
  line-height: 26px;
  ${({ $locked }) => $locked && css`
    color: #929292;
    font: 17px/28px ${ui};
  `}
`;

const GapCell = styled.td`
  background: #f7f7f7;
  border-right: 1px solid #c9c9c9;
`;

const StateCell = styled.td`
  background: ${({ $tint }) => $tint || 'transparent'};
  border-right: 1px solid #c9c9c9;
`;

const StateParts = styled.div`
  display: flex;
  align-items: flex-start;
  gap: 2px;
  height: 26px;
  padding: 1px 1px 0 3px;
`;

const TargetCell = styled.td`
  && {
    padding-left: 5px;
  }
  font: 17px/28px ${ui};
`;

const Cursor = styled.span`
  display: inline-block;
  height: 27px;
  margin-left: -1px;
  border-left: 1px solid #111;
  vertical-align: top;
`;

const CodeCell = styled.td`
  && {
    padding-right: 5px;
  }
  background: #efefef;
  border-left: 1px solid #bdbdbd;
  text-align: center;
  vertical-align: top;
  font: 16px/22px ${ui};
`;

const ScrollBar = styled.div`
  flex: none;
  width: 21px;
  padding: ${({ $top }) => $top}px 7px 0 7px;
  background: #efefef;
  border-left: 1px solid #fff;
  i {
    display: block;
    height: 21px;
    background: #858585;
  }
`;

const BookmarkPanel = styled.section`
  flex: none;
  height: 142px;
  margin-top: 5px;
  background: #fff;
  border: 1px solid ${line};
`;

const MarkTools = styled.div`
  display: flex;
  align-items: center;
  gap: 7px;
  height: 27px;
  padding: 0 0 1px 3px;
  background: linear-gradient(#fcfcfc, #efefef);
  font: 16px/20px "Noto Sans CJK KR", sans-serif;
  color: #111;
`;

const Grip = styled.i`
  width: 2px;
  height: 18px;
  background: repeating-linear-gradient(#9a9a9a 0 2px, transparent 2px 4px);
`;

const MarkButton = styled.button`
  display: flex;
  align-items: center;
  gap: 4px;
  color: ${({ $off }) => ($off ? '#8f8f8f' : 'inherit')};
`;

const SelectWrap = styled.span`
  display: flex;
  align-items: center;
  width: 196px;
  height: 26px;
  margin-left: 1px;
  padding-right: 6px;
  background: #fff;
  select {
    flex: 1;
    padding-left: 4px;
    appearance: none;
  }
`;

const MarkBody = styled.div`
  display: flex;
  height: 80px;
  margin: 4px 5px 0;
`;

const MarkTable = styled.table`
  flex: 1;
  table-layout: fixed;
  width: 100%;
  align-self: flex-start;
  border: 1px solid #a5a5a5;
  border-right: 0;
  font: 15px/18px ${thin};
  color: #111;
  th {
    height: 21px;
    padding: 0 0 1px 7px;
    font-weight: 400;
    text-align: left;
    border-right: 1px solid #e5e5e5;
  }
  td {
    height: 27px;
    padding: 0 0 1px 3px;
    white-space: nowrap;
    overflow: hidden;
    border-top: 1px solid #a5a5a5;
  }
`;

const MarkRow = styled.tr`
  ${({ $active }) => $active && 'background: #0078d7; color: #fff;'}
`;

const Side = styled.aside`
  display: flex;
  flex-direction: column;
  gap: 10px;
  flex: none;
  width: 29px;
  padding-left: 1px;
`;

const SideTab = styled.button`
  display: flex;
  align-items: center;
  gap: ${({ $gap }) => $gap || 7}px;
  width: 24px;
  height: ${({ $height }) => $height}px;
  padding-top: 3px;
  writing-mode: vertical-rl;
  text-orientation: sideways;
  font: 15px/22px ${thin};
  color: #1a9bdc;
  background: #fff;
  border: 1px solid ${line};
  border-right: 0;
`;

const Footer = styled.footer`
  flex: none;
  height: 7px;
  background: #fff;
  border-top: 3px solid #f5f5f5;
  box-shadow: inset 0 2px #7d99bb;
`;

export default App;
